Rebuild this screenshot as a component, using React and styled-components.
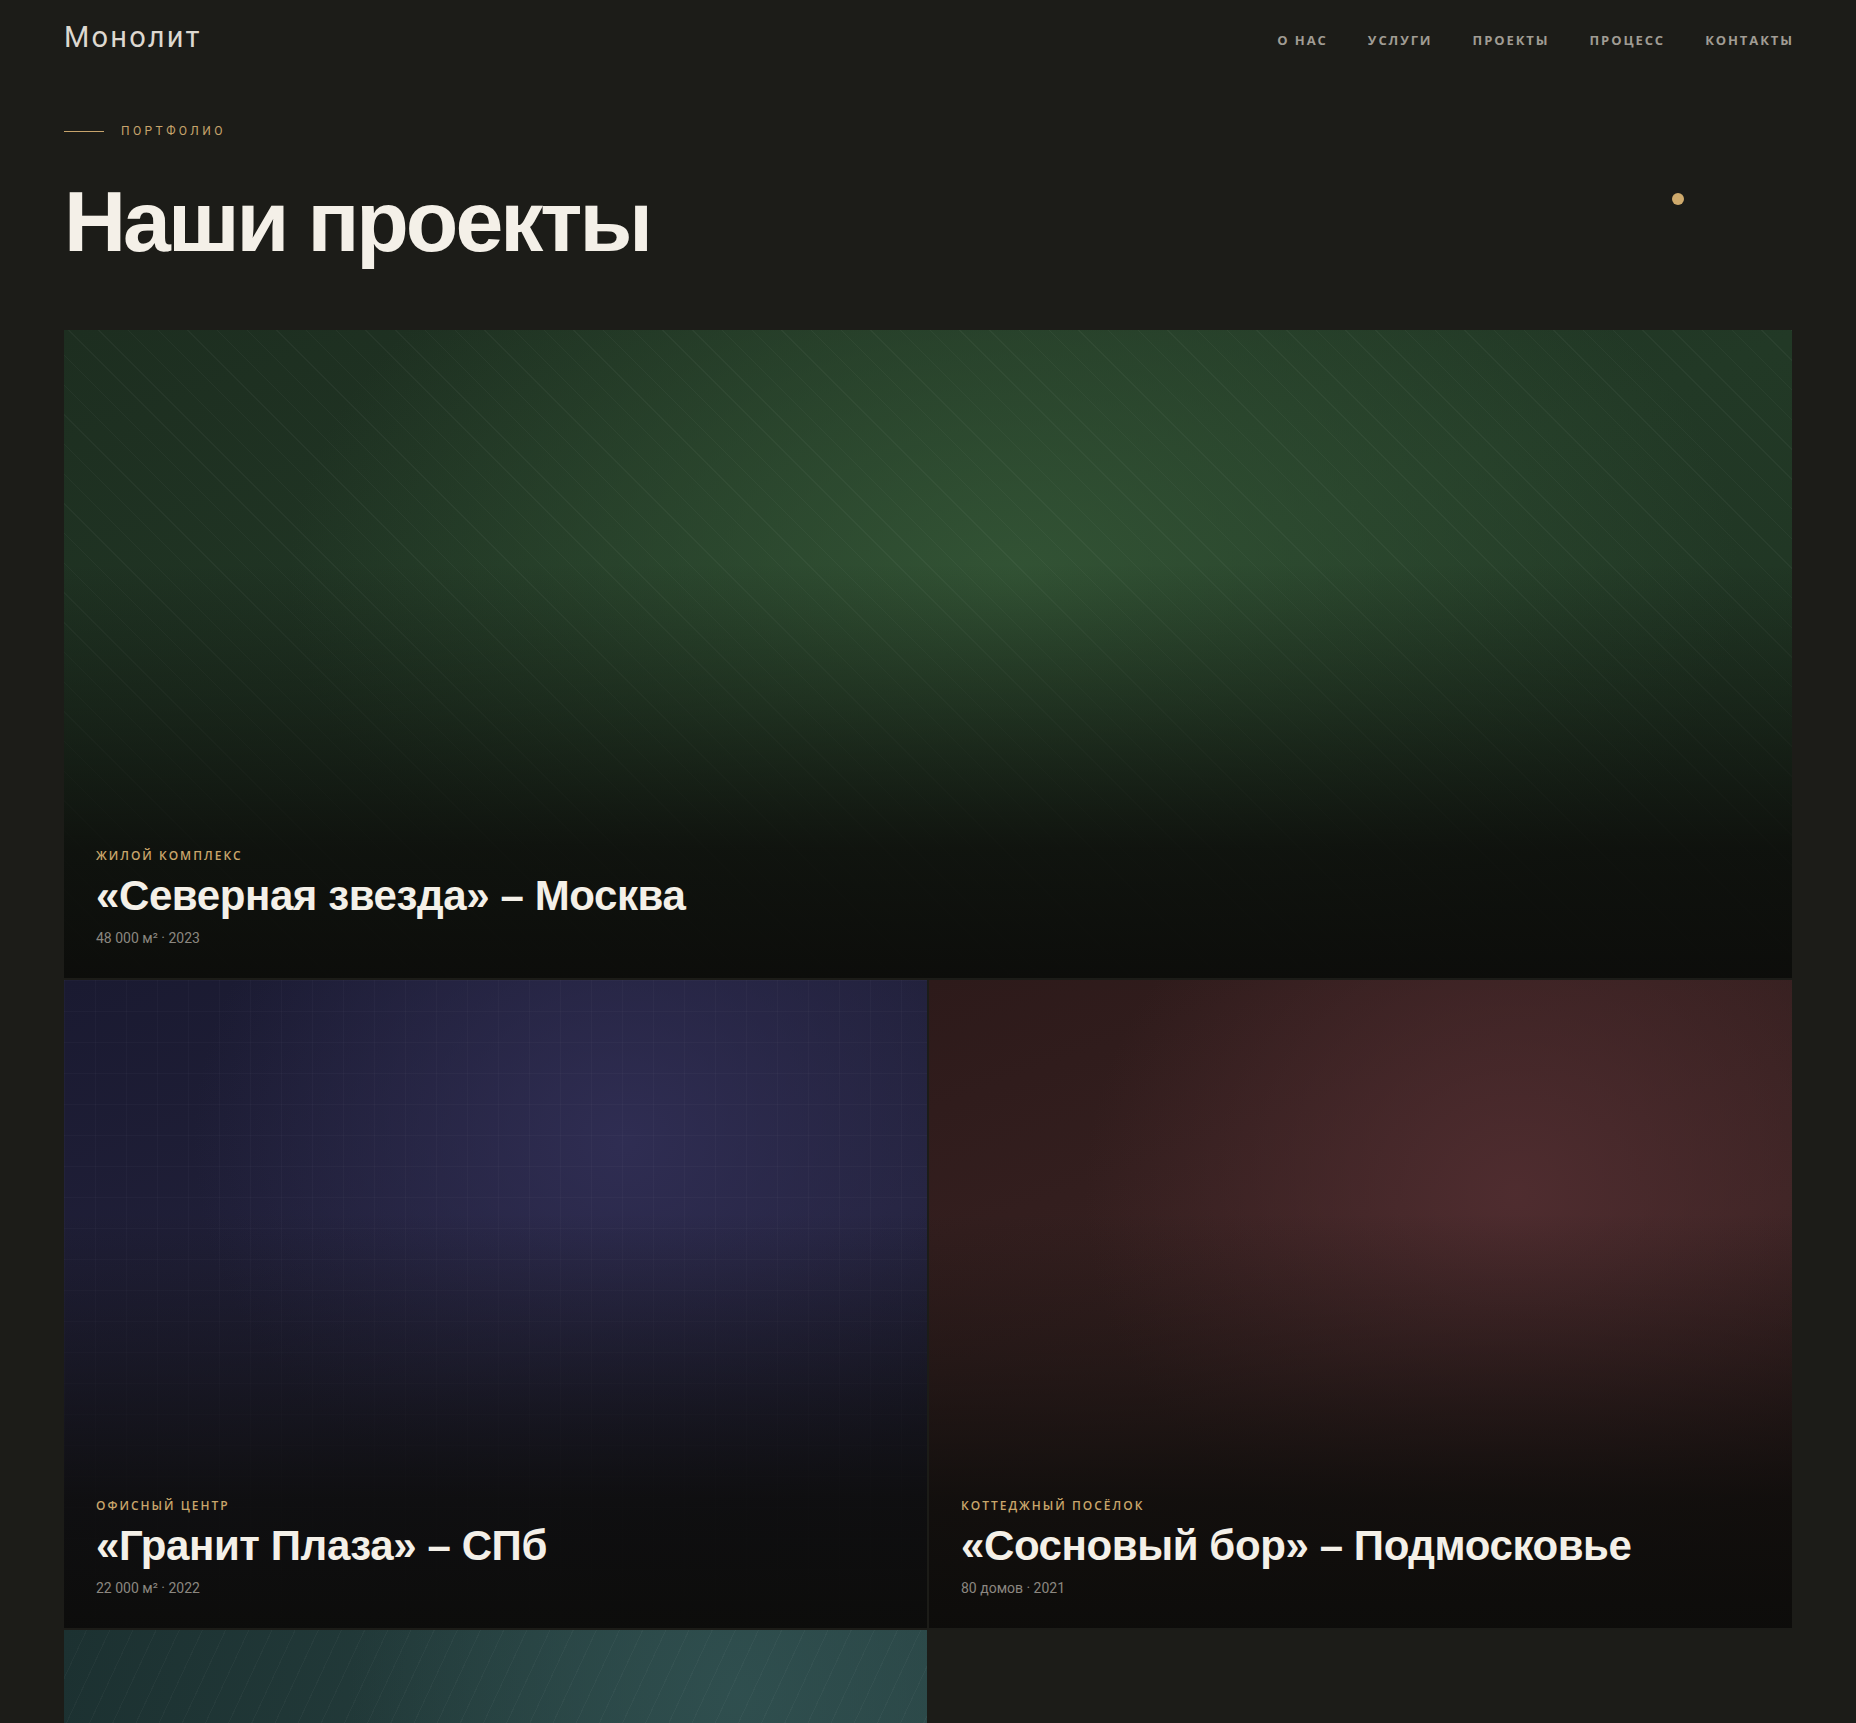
import styled, { createGlobalStyle } from "styled-components";

const GlobalStyle = createGlobalStyle`
    * {
        box-sizing: border-box;
    }
    body {
        margin: 0;
        background: #1c1c18;
        font-family: "Liberation Sans", Arial, sans-serif;
        -webkit-font-smoothing: antialiased;
    }
`

const navItems = ["О нас", "Услуги", "Проекты", "Процесс", "Контакты"]

const projects = [
    {
        id: 1,
        category: "Жилой комплекс",
        title: "«Северная звезда» – Москва",
        meta: "48 000 м² · 2023",
        variant: "forest",
        wide: true
    },
    {
        id: 2,
        category: "Офисный центр",
        title: "«Гранит Плаза» – СПб",
        meta: "22 000 м² · 2022",
        variant: "night"
    },
    {
        id: 3,
        category: "Коттеджный посёлок",
        title: "«Сосновый бор» – Подмосковье",
        meta: "80 домов · 2021",
        variant: "brick"
    },
    {
        id: 4,
        category: "Бизнес-парк",
        title: "«Морской» – Казань",
        meta: "35 000 м² · 2020",
        variant: "sea"
    }
]

// bottom shade so the caption stays readable
const shade = `linear-gradient(to top, rgba(12, 12, 10, 0.97) 0%, rgba(12, 12, 10, 0.85) 20%, rgba(12, 12, 10, 0.4) 42%, rgba(12, 12, 10, 0) 64%)`

const backgrounds = {
    forest: `
        ${shade},
        repeating-linear-gradient(45deg, rgba(255, 255, 255, 0) 0 20px, rgba(255, 255, 255, 0.035) 20px 21px),
        radial-gradient(ellipse 42% 70% at 55% 38%, rgba(52, 86, 54, 0.9), rgba(52, 86, 54, 0) 100%),
        linear-gradient(160deg, #1d2e20 0%, #223926 50%, #1f3322 100%)
    `,
    night: `
        ${shade},
        linear-gradient(rgba(255, 255, 255, 0.025) 1px, transparent 1px) 0 0 / 31px 31px,
        linear-gradient(90deg, rgba(255, 255, 255, 0.025) 1px, transparent 1px) 0 0 / 31px 31px,
        radial-gradient(ellipse 50% 60% at 65% 25%, rgba(48, 46, 84, 0.95), rgba(48, 46, 84, 0) 100%),
        linear-gradient(160deg, #1a1a31 0%, #23223c 55%, #1d1c32 100%)
    `,
    brick: `
        ${shade},
        radial-gradient(ellipse 50% 60% at 68% 33%, rgba(80, 45, 48, 0.95), rgba(80, 45, 48, 0) 100%),
        linear-gradient(160deg, #2d1a1a 0%, #392222 55%, #301c1d 100%)
    `,
    sea: `
        ${shade},
        repeating-linear-gradient(115deg, rgba(255, 255, 255, 0) 0 20px, rgba(255, 255, 255, 0.03) 20px 21px),
        radial-gradient(ellipse 45% 70% at 78% 10%, rgba(48, 80, 80, 0.9), rgba(48, 80, 80, 0) 100%),
        linear-gradient(100deg, #1c3131 0%, #26403f 60%, #2a4545 100%)
    `
}

export default function App() {
    return (
        <>
            <GlobalStyle />
            <Page>
                <Header>
                    <Logo>Монолит</Logo>
                    <Nav>
                        {navItems.map((item) => (
                            <NavLink key={item} href="#">{item}</NavLink>
                        ))}
                    </Nav>
                </Header>

                <Hero>
                    <Eyebrow>
                        <Rule />
                        <span>Портфолио</span>
                    </Eyebrow>
                    <Title>Наши проекты</Title>
                    <Dot />
                </Hero>

                <Grid>
                    {projects.map((p) => (
                        <Card key={p.id} $variant={p.variant} $wide={p.wide}>
                            <CardBody>
                                <Category>{p.category}</Category>
                                <CardTitle>{p.title}</CardTitle>
                                <Meta>{p.meta}</Meta>
                            </CardBody>
                        </Card>
                    ))}
                </Grid>
            </Page>
        </>
    )
}

const Page = styled.div`
    padding: 0 64px 80px;
    min-height: 100vh;
    background: #1c1c18;
`

const Header = styled.header`
    height: 80px;
    display: flex;
    align-items: center;
    justify-content: space-between;
`

const Logo = styled.div`
    font-family: Roboto, "Liberation Sans", sans-serif;
    font-size: 29px;
    font-weight: 400;
    letter-spacing: 2.2px;
    color: #ddd8d0;
    margin-top: -6px;
`

const Nav = styled.nav`
    display: flex;
    align-items: center;
    gap: 42px;
`

const NavLink = styled.a`
    font-family: "Open Sans", "Noto Sans", sans-serif;
    font-size: 13px;
    font-weight: 700;
    letter-spacing: 1.9px;
    text-transform: uppercase;
    text-decoration: none;
    color: #a09c94;
    margin-right: -1.9px;
`

const Hero = styled.section`
    position: relative;
    padding-top: 43px;
    padding-bottom: 66px;
`

const Eyebrow = styled.div`
    display: flex;
    align-items: center;
    gap: 17px;
    font-family: Roboto, "Liberation Sans", sans-serif;
    font-size: 12px;
    line-height: 16px;
    letter-spacing: 3.4px;
    text-transform: uppercase;
    color: #c7a46c;
`

const Rule = styled.span`
    width: 40px;
    height: 1px;
    background: #c7a46c;
`

const Title = styled.h1`
    margin: 39px 0 0;
    font-family: "Liberation Sans", Arial, sans-serif;
    font-size: 86px;
    line-height: 1;
    font-weight: 700;
    letter-spacing: -3px;
    color: #f4f0e8;
`

const Dot = styled.span`
    position: absolute;
    right: 108px;
    top: 113px;
    width: 12px;
    height: 12px;
    border-radius: 50%;
    background: #cfaa6c;
`

const Grid = styled.div`
    display: grid;
    grid-template-columns: 1fr 1fr;
    grid-auto-rows: 648px;
    gap: 2px;
`

const Card = styled.article`
    grid-column: ${(p) => (p.$wide ? "span 2" : "span 1")};
    background: ${(p) => backgrounds[p.$variant]};
    overflow: hidden;
`

const CardBody = styled.div`
    height: 100%;
    display: flex;
    flex-direction: column;
    justify-content: flex-end;
    padding: 0 32px 30px;
`

const Category = styled.div`
    font-family: "Open Sans", "Noto Sans", sans-serif;
    font-size: 12px;
    line-height: 16px;
    font-weight: 600;
    letter-spacing: 2px;
    text-transform: uppercase;
    color: #c9a66b;
`

const CardTitle = styled.h2`
    margin: 8px 0 8px;
    font-family: "Liberation Sans", Arial, sans-serif;
    font-size: 42px;
    line-height: 48px;
    font-weight: 700;
    letter-spacing: -0.4px;
    color: #f4f0e8;
`

const Meta = styled.div`
    font-family: Roboto, "Liberation Sans", sans-serif;
    font-size: 14px;
    line-height: 20px;
    color: #8b8780;
`
